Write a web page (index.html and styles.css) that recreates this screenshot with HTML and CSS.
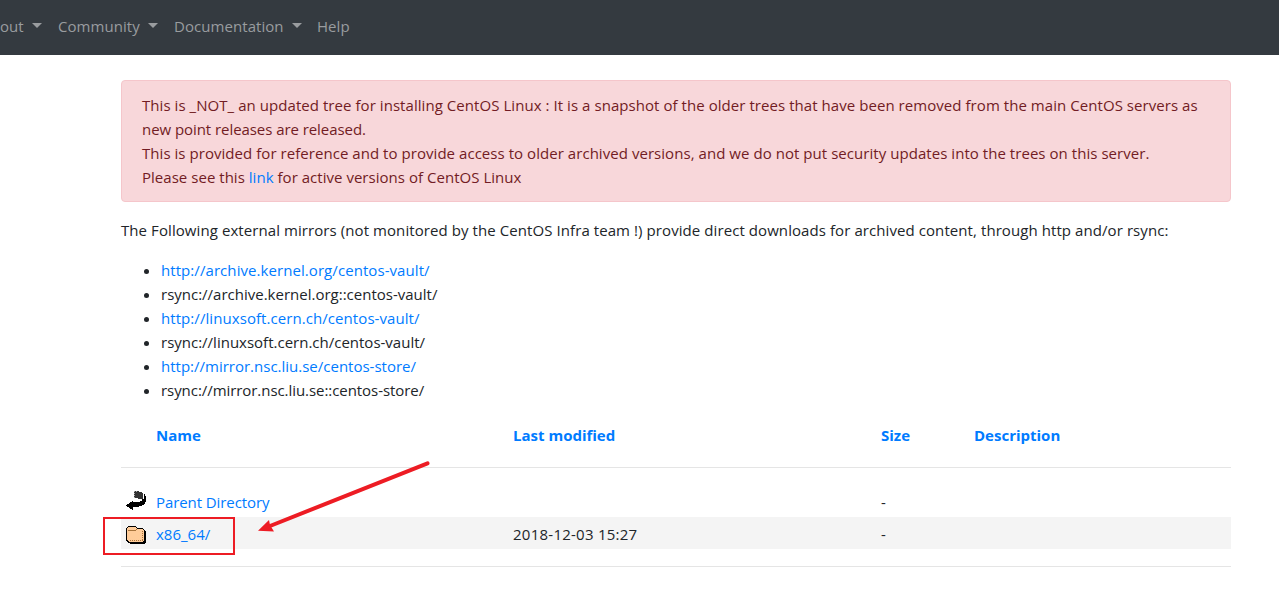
FILE: index.html
```
<!DOCTYPE html>
<html lang="en">
<head>
<meta charset="utf-8">
<title>CentOS Vault</title>
<link rel="stylesheet" href="styles.css">
</head>
<body>
<nav class="navbar">
  <a class="nav-link dropdown nav-about">out</a>
  <a class="nav-link dropdown nav-community">Community</a>
  <a class="nav-link dropdown nav-docs">Documentation</a>
  <a class="nav-link nav-help">Help</a>
</nav>
<main class="container">
  <div class="alert">
    <span class="l1">This is _NOT_ an updated tree for installing CentOS Linux : It is a snapshot of the older trees that have been removed from the main CentOS servers as</span><br>
    <span class="l2">new point releases are released.</span><br>
    <span class="l3">This is provided for reference and to provide access to older archived versions, and we do not put security updates into the trees on this server.</span><br>
    <span class="l4">Please see this <a>link</a> for active versions of CentOS Linux</span>
  </div>
  <p class="intro">The Following external mirrors (not monitored by the CentOS Infra team !) provide direct downloads for archived content, through http and/or rsync:</p>
  <ul class="mirrors">
    <li class="wide"><a>http://archive.kernel.org/centos-vault/</a></li>
    <li>rsync://archive.kernel.org::centos-vault/</li>
    <li class="wide"><a>http://linuxsoft.cern.ch/centos-vault/</a></li>
    <li>rsync://linuxsoft.cern.ch/centos-vault/</li>
    <li><a>http://mirror.nsc.liu.se/centos-store/</a></li>
    <li class="narrow">rsync://mirror.nsc.liu.se::centos-store/</li>
  </ul>
  <div class="listing">
    <div class="row head"><span></span><a>Name</a><a class="modified">Last modified</a><a>Size</a><a>Description</a></div>
    <hr class="rule">
    <div class="row entry">
      <svg class="icon" width="20" height="22" viewBox="0 0 20 22" shape-rendering="crispEdges">
        <path d="M8 1h5v1h3v1h1v6h-5V8H8z" fill="#333"/>
        <path d="M8 1h1v1H8zM8 3h1v1H8zM8 5h1v1H8zM8 7h1v1H8zM10 1h1v1h-1z" fill="#aaa"/>
        <path d="M18 4h1v2h1v6h-1v2h-1v1h-2v1h-3v1H7v3H6v-1H4v-1H3v-1H1v-1H0v-1h1v-1h2v-1h1v-1h2v-1h1v1h7v-1h2V9h2z" fill="#000"/>
      </svg>
      <a class="parent">Parent Directory</a><span></span><span>-</span><span></span>
    </div>
    <div class="row entry shaded">
      <svg class="icon" width="20" height="22" viewBox="0 0 20 22" shape-rendering="crispEdges">
        <path d="M2 3h8v1h1v1h6v1h1v1h1v1h1v12h-1v1H4v-1H2v-1H1v-1H0V5h1V4h1z" fill="#000"/>
        <path d="M2 4h8v1h1v1h6v1h1v11h-1v1H3v-1H2v-1H1V5h1z" fill="#fc9"/>
        <path d="M2 7h8v1H2zM10 6h1v1h-1z" fill="#a8743c"/>
        <path d="M4 17.500h13M16.500 8v9" fill="none" stroke="#a8743c" stroke-dasharray="1 1"/>
      </svg>
      <a class="arch">x86_64/</a><span class="date">2018-12-03 15:27</span><span>-</span><span></span>
    </div>
    <hr class="rule last">
  </div>
</main>
<div class="highlight"></div>
<svg class="arrow" width="180" height="80" viewBox="0 0 180 80">
  <path d="M177.500 4.300L20 67" fill="none" stroke="#ed1c24" stroke-width="4" stroke-linecap="round"/>
  <path d="M8 71.700L19 61L20 66L24 72.500z" fill="#ed1c24"/>
</svg>
</body>
</html>
```
FILE: styles.css
```
* { box-sizing: border-box; }
body {
  margin: 0;
  height: 589px;
  overflow: hidden;
  background: #fff;
  color: #212529;
  font: 15px/24px "Open Sans", "Noto Sans", sans-serif;
}
a { color: #007bff; }
.navbar {
  display: flex;
  align-items: center;
  height: 55px;
  padding-bottom: 3px;
  background: #343a40;
}
.nav-link { color: #999c9f; display: flex; align-items: center; flex: none; letter-spacing: 0.06px; }
.nav-about { width: 58px; }
.nav-community { width: 116px; }
.nav-docs { width: 143px; }
.dropdown::after {
  content: "";
  margin: -1px 0 0 8px;
  border: 5px solid transparent;
  border-top-color: #999c9f;
  border-bottom: 0;
}
.container { width: 1110px; margin: 25px 0 0 121px; }
.alert {
  height: 122px;
  padding: 12px 20px;
  border: 1px solid #f5c6cb;
  border-radius: 4px;
  background: #f8d7da;
  color: #721c24;
  white-space: nowrap;
}
.l1 { letter-spacing: 0.057px; }
.l2 { letter-spacing: -0.06px; }
.l3 { letter-spacing: 0.049px; }
.l4 { letter-spacing: 0.03px; }
.intro { margin: 16px 0; white-space: nowrap; letter-spacing: 0.079px; }
.mirrors { margin: 0 0 17px; padding-left: 40px; }
.wide { letter-spacing: 0.07px; }
.narrow { letter-spacing: -0.06px; }
.row {
  display: grid;
  grid-template-columns: 35px 357px 368px 93px 1fr;
  align-items: center;
  height: 32px;
}
.head { font-weight: 700; }
.entry { padding-top: 2px; }
.entry .icon { margin-top: -3px; }
.parent { letter-spacing: -0.08px; }
.date { letter-spacing: 0.25px; }
.shaded { background: #f4f4f4; }
.shaded .icon { margin-top: -1px; }
.icon { margin-left: 5px; display: block; }
.rule { height: 1px; margin: 16px 0 17px; border: 0; background: #e5e5e5; }
.last { margin-top: 17px; }
.highlight {
  position: absolute;
  left: 103px;
  top: 517px;
  width: 132px;
  height: 38px;
  border: 2px solid #ed1c24;
}
.arrow { position: absolute; left: 250px; top: 459px; }
```
